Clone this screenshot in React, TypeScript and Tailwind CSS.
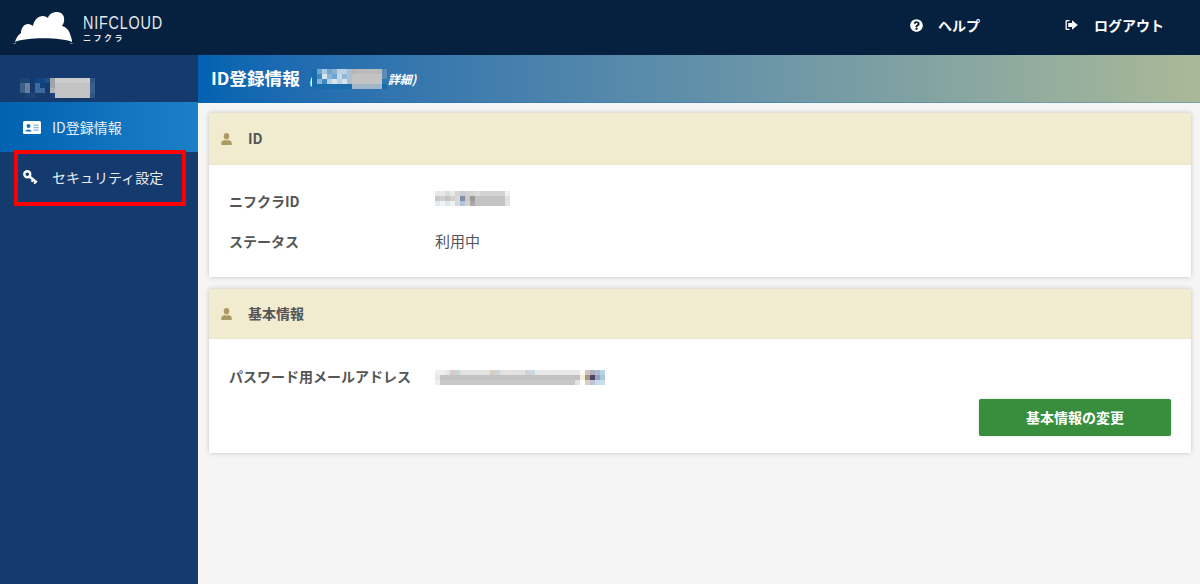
import React from 'react';
import { FaQuestionCircle } from 'react-icons/fa';

const jp = { fontFamily: '"Noto Sans CJK JP", "Liberation Sans", sans-serif' };

// pixelated (blurred out) values from the screenshot
const Mosaic: React.FC<{ rows: string[][]; cell?: number }> = ({ rows, cell = 5 }) => (
  <div className="flex flex-col shrink-0">
    {rows.map((row, y) => (
      <div key={y} className="flex">
        {row.map((color, x) => (
          <div key={x} style={{ width: cell, height: cell, background: color }} />
        ))}
      </div>
    ))}
  </div>
);

const repeat = (color: string, n: number) => Array<string>(n).fill(color);

const G = '#c3c3c3';
const N = '#153a6e';
const sideRows = [
  ['#1d4474', '#1d4474', N, '#0f4585', '#0f4585', '#1d4f86', '#9ca3ad', ...repeat('#cccccc', 7), '#2f5788'],
  ['#3c5f88', '#6b7f98', N, '#3a6aa0', '#123f7c', N, '#9ca3ad', ...repeat(G, 7), '#3a5f8c'],
  ['#3c5f88', '#6b7f98', N, '#3a6aa0', '#3a6aa0', N, '#b0b4b8', ...repeat(G, 7), '#3a5f8c'],
  [N, '#1d4474', '#1d4474', N, N, N, '#1d4474', ...repeat(G, 7), '#2f5788'],
];
const titleRows = [
  ['#1a6cab', '#70a5cf', '#a9c8e0', '#70a5cf', '#88b0d0', '#bcd2e2', '#bcd2e2', '#a9c0d2', '#b5b5b5', ...repeat('#bbbbbb', 5), '#5a8db8'],
  ['#1a6cab', '#3f88c0', '#d5e4ee', '#88b5d8', '#6fa6d0', '#c5d8e6', '#8fb8d6', '#a9c0d2', ...repeat(G, 6), '#5a8db8'],
  ['#1a6cab', '#8ab5d8', '#3f88c0', '#b9d2e6', '#d5e4ee', '#b9d2e6', '#d5e4ee', '#a9c0d2', ...repeat(G, 6), '#2a78b0'],
  [...repeat('#1a6cab', 6), '#1a6cab', '#1a6cab', ...repeat('#9fb6c8', 6), '#1a6cab'],
];
const idRows = [
  ['#e8e8e8', '#e8e8e8', '#dcdcdc', '#e8e8e8', '#d8d4d0', '#c8ccd4', '#d8d0cc', '#d4d4d4', '#dcdcdc', ...repeat('#d2d2d2', 5), '#f0f0f0'],
  ['#c8c8c8', '#d0d0d0', '#c4c4c4', '#d0d0d0', '#dcd8d4', '#7f8ea8', '#d0c8c4', '#9a9a9a', ...repeat(G, 6), '#e0e0e0'],
  ['#e4eaee', '#f0f4f6', '#dfe8ee', '#eef2f4', '#d8d8d8', '#adc6e0', '#d8d0cc', '#a8a8a8', ...repeat(G, 6), '#e4e4e4'],
];
const mailRows = [
  ['#efefef', '#efefef', '#e6e6e6', '#d8cccc', '#c8d4de', ...repeat('#e2e2e0', 6), '#d8cfc4', '#ccd4de', ...repeat('#e2e2e0', 3), '#dce4e0', '#e2e2e0', '#d8d0d0', '#c8d8e4', ...repeat('#e8e8e8', 9), '#fbfbf5', '#d8c0b8', '#b0b0c0', '#b0bccc', '#b8d4e4'],
  ['#e8e8e8', ...repeat(G, 28), '#f4f0e0', '#a89878', '#4a4468', '#9aa0b8', '#a8c8dc'],
  ['#efefef', ...repeat('#c8c8c8', 27), '#e4e4e4', '#ffffff', '#dccfc8', '#c0c4d0', '#c8dcea', '#c8dcea'],
];

const NifLogo = () => (
  <svg width="60" height="33" viewBox="0 0 60 33" className="shrink-0">
    <path
      fill="#ffffff"
      d="M2 31 C3 27 5 24 8 22 C8 17 11 13 15 13 C17 13 19 14 20 15 C21 9 25 5 30 5 C32 5 34 6 35 7 C36 3 40 1 44 1 C49 1 52 5 51 10 C51 12 50 13 49 15 C53 16 56 19 57 23 C58 26 59 28 59 31 C48 26 13 26 2 31 Z"
    />
    <path d="M0 33 L3 32 M57 32 L60 33" fill="none" stroke="#8fa0b2" strokeWidth="0.8" />
  </svg>
);

const LogoutIcon = () => (
  <svg width="13" height="12" viewBox="0 0 13 12" fill="#ffffff" className="shrink-0">
    <path d="M0.5 2 Q0.5 1 1.5 1 H4.5 V2.2 H1.8 V9.8 H4.5 V11 H1.5 Q0.5 11 0.5 10 Z" />
    <path d="M7 1.2 L12.8 6 L7 10.8 V8 H3.2 V4 H7 Z" />
  </svg>
);

const IdCardIcon = () => (
  <svg width="18" height="13" viewBox="0 0 18 13" className="shrink-0">
    <rect width="18" height="13" rx="1.5" fill="#ffffff" />
    <circle cx="5.5" cy="5" r="2" fill="#1270b8" />
    <path d="M2.5 10.5 C2.5 7.8 8.5 7.8 8.5 10.5 Z" fill="#1270b8" />
    <rect x="10.5" y="3.5" width="5.5" height="1.3" fill="#8fbbdc" />
    <rect x="10.5" y="6" width="5.5" height="1.3" fill="#8fbbdc" />
    <rect x="10.5" y="8.5" width="5.5" height="1.3" fill="#8fbbdc" />
  </svg>
);

const KeyIcon = () => (
  <svg width="15" height="15" viewBox="0 0 14 14" className="shrink-0">
    <circle cx="4" cy="4" r="2.8" fill="none" stroke="#ffffff" strokeWidth="2.2" />
    <path d="M6 6 L12.8 11.6" stroke="#ffffff" strokeWidth="2.4" fill="none" />
    <path d="M9.5 9 L8 11 M11.8 10.8 L10.5 12.8" stroke="#ffffff" strokeWidth="1.8" fill="none" />
  </svg>
);

const PersonIcon = () => (
  <svg width="11" height="12" viewBox="0 0 11 12" fill="#ab9a63" className="shrink-0">
    <ellipse cx="5.5" cy="3.2" rx="2.7" ry="3.2" />
    <path d="M0.3 12 V9.8 C0.3 8.4 2 7.4 3.6 7 C4.6 7.7 6.4 7.7 7.4 7 C9 7.4 10.7 8.4 10.7 9.8 V12 Z" />
  </svg>
);

const CardHeader: React.FC<{ title: string; h: string }> = ({ title, h }) => (
  <div className={`flex items-center bg-[#f1ebcf] border-b border-[#ece6cc] pl-[12px] ${h}`}>
    <PersonIcon />
    <span className="ml-[16px] text-[14px] font-bold text-[#555555]">{title}</span>
  </div>
);

export default function App() {
  return (
    <div className="w-[1200px] h-[584px] overflow-hidden flex flex-col bg-[#f5f5f5] relative" style={jp}>
      <header className="h-[55px] shrink-0 bg-[#06213f] flex items-center">
        <div className="ml-[13px] flex items-center">
          <NifLogo />
          <div className="ml-[10px] text-[#e4e8ec] leading-none">
            <div className="text-[18px] tracking-[1px] font-['Liberation_Sans',sans-serif] scale-x-[0.8] origin-left">NIFCLOUD</div>
            <div className="text-[8px] tracking-[2.5px] mt-[2px] font-bold">ニフクラ</div>
          </div>
        </div>
        <div className="ml-auto flex items-center text-white text-[14px] font-bold pb-[5px]">
          <FaQuestionCircle className="w-[13px] h-[13px]" />
          <span className="ml-[15px]">ヘルプ</span>
          <div className="ml-[85px]"><LogoutIcon /></div>
          <span className="ml-[16px] mr-[36px]">ログアウト</span>
        </div>
      </header>

      <div className="flex flex-1 min-h-0">
        <aside className="w-[198px] shrink-0 bg-[#153a6e] text-[#e8eef4] text-[14px]">
          <div className="h-[47px] pt-[23px] pl-[20px]">
            <Mosaic rows={sideRows} />
          </div>
          <div className="h-[50px] flex items-center pl-[23px] bg-gradient-to-r from-[#0062b1] to-[#1b80c8]">
            <IdCardIcon />
            <span className="ml-[11px] mt-[1px]">ID登録情報</span>
          </div>
          <div className="h-[50px] flex items-center pl-[23px]">
            <KeyIcon />
            <span className="ml-[14px] mt-[1px]">セキュリティ設定</span>
          </div>
        </aside>

        <main className="flex-1 min-w-0">
          <div className="h-[48px] flex items-center pl-[13px] bg-gradient-to-r from-[#0062b1] to-[#aab997] border-b border-[#0f6db0]/30 text-white">
            <span className="text-[17.6px] font-bold">ID登録情報</span>
            <span className="ml-[9px] flex items-center text-[12px] font-bold italic">
              <span className="w-[3px]">(</span>
              <Mosaic rows={titleRows} />
              <span className="ml-[1px]">詳細)</span>
            </span>
          </div>

          <div className="px-[11px] pt-[10px] flex flex-col gap-[12px] pr-[9px]">
            <section className="bg-white h-[164px] shadow-[0_0_5px_rgba(0,0,0,0.2)]">
              <CardHeader title="ID" h="h-[52px]" />
              <div className="pl-[20px] pt-[15px] text-[14px] text-[#555555]">
                <div className="flex items-center h-[41px]">
                  <span className="w-[206px] font-bold mt-[1px]">ニフクラID</span>
                  <div className="-mt-[5px]"><Mosaic rows={idRows} /></div>
                </div>
                <div className="flex items-center h-[41px]">
                  <span className="w-[206px] font-bold">ステータス</span>
                  <span className="-mt-[1px] text-[15px]">利用中</span>
                </div>
              </div>
            </section>

            <section className="bg-white h-[164px] shadow-[0_0_5px_rgba(0,0,0,0.2)]">
              <CardHeader title="基本情報" h="h-[50px]" />
              <div className="pl-[20px] pr-[20px] pt-[17px] text-[14px] text-[#555555]">
                <div className="flex items-center h-[41px]">
                  <span className="w-[206px] font-bold whitespace-nowrap">パスワード用メールアドレス</span>
                  <div className="mt-[1px]"><Mosaic rows={mailRows} /></div>
                </div>
                <div className="flex justify-end mt-[2px]">
                  <button className="w-[192px] h-[37px] bg-[#398e3e] rounded-[2px] text-white text-[14px] font-bold shadow-[0_0_2px_rgba(0,0,0,0.25)]">
                    基本情報の変更
                  </button>
                </div>
              </div>
            </section>
          </div>
        </main>
      </div>

      {/* red annotation drawn on the screenshot */}
      <div className="absolute left-[14px] top-[150px] w-[172px] h-[56px] border-[4px] border-[#ff0000] pointer-events-none" />
    </div>
  );
}
